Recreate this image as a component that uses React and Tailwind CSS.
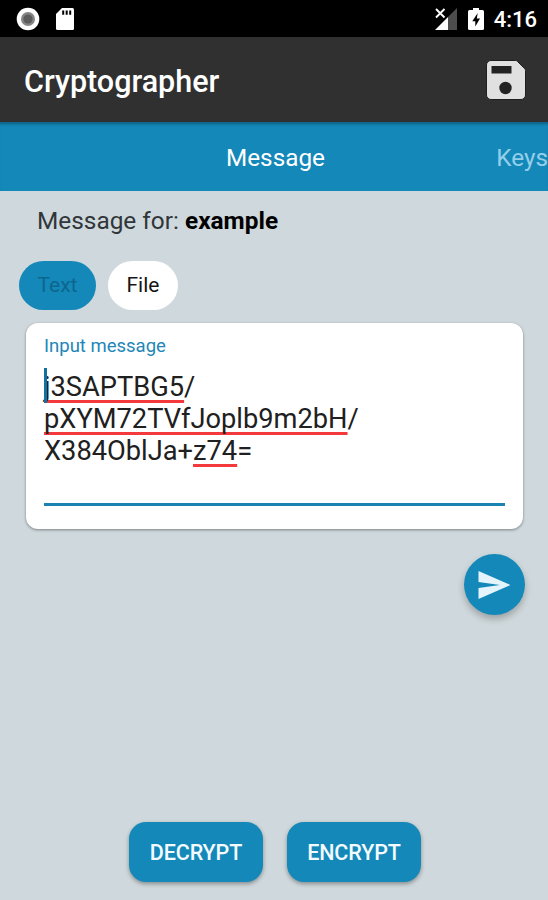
import React from 'react';

const RecordIcon = () => (
  <svg className="h-[24px] w-[24px]" viewBox="0 0 24 24">
    <circle cx="12" cy="12" r="11.300" fill="#fff" />
    <circle cx="12" cy="12" r="7" fill="#858585" />
    <circle cx="12" cy="12" r="4.600" fill="#5c5c5c" />
  </svg>
);

const SdCardIcon = () => (
  <svg className="h-[24px] w-[20px]" viewBox="0 0 20 24">
    <path fill="#fff" d="M7 1h10.500A1.500 1.500 0 0 1 19 2.500v19a1.500 1.500 0 0 1-1.500 1.500h-15A1.500 1.500 0 0 1 1 21.500V7z" />
    <path fill="#000" d="M7.200 3.600h2v4.200h-2zM10.700 3.600h2v4.200h-2zM14.200 3.600h2v4.200h-2z" />
  </svg>
);

const SignalIcon = () => (
  <svg className="h-[24px] w-[24px]" viewBox="0 0 24 24">
    <path fill="#4d4d4d" d="M23 1v22h-9V10z" />
    <path fill="#fff" d="M14 10v13H1z" />
    <path stroke="#fff" strokeWidth="1.900" d="m2 2 8.500 8.500M10.500 2 2 10.500" />
  </svg>
);

const BatteryIcon = () => (
  <svg className="h-[24px] w-[18px]" viewBox="0 0 18 24">
    <path fill="#fff" d="M6 1h6v2h3.500A1.500 1.500 0 0 1 17 4.500v17a1.500 1.500 0 0 1-1.500 1.500h-13A1.500 1.500 0 0 1 1 21.500v-17A1.500 1.500 0 0 1 2.500 3H6z" />
    <path fill="#000" d="M10.700 6 5.300 14.300h3V19.500l4.700-8h-3.200z" />
  </svg>
);

const SaveIcon = () => (
  <svg className="h-[40px] w-[40px]" viewBox="0 0 40 40">
    <path fill="#e0e0e0" stroke="#1f1f1f" strokeWidth="1" d="M5 .500h24.500q1 0 2 1l7 7q1 1 1 2V35a4.500 4.500 0 0 1-4.500 4.500H5A4.500 4.500 0 0 1 .500 35V5A4.500 4.500 0 0 1 5 .500z" />
    <path fill="#222" d="M5.500 6h20v7.500h-20z" />
    <circle cx="19.500" cy="28" r="6.200" fill="#222" />
  </svg>
);

const SendIcon = () => (
  <svg className="h-[28px] w-[33px]" viewBox="0 0 33 28">
    <path fill="#e3f4fd" d="M.500 0 32.500 14 .500 28V17L22 14 .500 11z" />
  </svg>
);

const StatusBar = () => (
  <div className="flex h-[37px] items-center bg-black pl-4 pr-[11px] text-white">
    <RecordIcon />
    <div className="ml-[15px] flex">
      <SdCardIcon />
    </div>
    <div className="ml-auto flex items-center">
      <SignalIcon />
      <div className="ml-[9px] flex">
        <BatteryIcon />
      </div>
      <span className="ml-[9px] mt-[2px] text-[22px] font-medium leading-6">4:16</span>
    </div>
  </div>
);

const Misspelled = ({ children }) => (
  <span className="underline decoration-[#f4393c] decoration-[3px] underline-offset-[4px] [text-decoration-skip-ink:none]">
    {children}
  </span>
);

const ActionButton = ({ children }) => (
  <button className="h-[60px] w-[134px] rounded-[17px] bg-[#1488b9] pt-[3px] text-[21.5px] font-medium tracking-[-0.1px] text-[#f3fbff] shadow-[0_2px_4px_rgba(0,0,0,0.35)]">
    {children}
  </button>
);

const App = () => {
  return (
    <div className="flex h-[900px] w-[548px] flex-col overflow-hidden bg-[#cfd8dc] font-['Roboto',sans-serif]">
      <StatusBar />

      <header className="flex h-[85px] items-center justify-between bg-[#303030] pl-[24px] pr-[22px]">
        <h1 className="mt-[4px] text-[30.5px] font-medium leading-9 text-white">Cryptographer</h1>
        <button className="mt-px">
          <SaveIcon />
        </button>
      </header>

      <nav className="flex h-[69px] items-center bg-[#1488b9] pl-[226px] pt-1 text-[24.3px] shadow-[inset_0_4px_3px_-2px_rgba(0,0,0,0.3)]">
        <span className="w-[271px] text-white">Message</span>
        <span className="whitespace-nowrap text-[#94cfe9]">Keys</span>
      </nav>

      <main className="flex flex-1 flex-col">
        <p className="ml-[37px] mt-[14px] text-[24.4px] leading-8 text-[#303639]">
          <span>Message for: </span>
          <b className="font-bold text-black">example</b>
        </p>

        <div className="ml-[19px] mt-6 flex gap-3 text-[21px]">
          <button className="h-[49px] w-[77px] rounded-full bg-[#1488b9] text-[#0d668e]">Text</button>
          <button className="h-[49px] w-[70px] rounded-full bg-white text-[#151515]">File</button>
        </div>

        <section className="ml-[26px] mt-[13px] h-[206px] w-[497px] rounded-xl bg-white px-[18px] pt-[11px] shadow-[0_1px_3px_rgba(0,0,0,0.4)]">
          <label className="block text-[18.5px] leading-6 text-[#2386b7]">Input message</label>
          <div className="relative mt-[13px] h-[135px] w-[461px] border-b-[3px] border-[#1b82b2] text-[27.25px] leading-8 text-[#202020]">
            <p><Misspelled>j3SAPTBG5</Misspelled>/</p>
            <p><Misspelled>pXYM72TVfJoplb9m2bH</Misspelled>/</p>
            <p>X384OblJa+<Misspelled>z74</Misspelled>=</p>
            <span className="absolute -top-[3px] left-0 h-[35px] w-[3px] bg-[#1470a0]" />
          </div>
        </section>

        <button className="ml-[464px] mt-[25px] flex h-[61px] w-[61px] items-center justify-center rounded-full bg-[#1488b9] shadow-[0_4px_7px_rgba(0,0,0,0.25)]">
          <SendIcon />
        </button>

        <div className="mb-[18px] ml-[129px] mt-auto flex gap-6">
          <ActionButton>DECRYPT</ActionButton>
          <ActionButton>ENCRYPT</ActionButton>
        </div>
      </main>
    </div>
  );
};

export default App;
